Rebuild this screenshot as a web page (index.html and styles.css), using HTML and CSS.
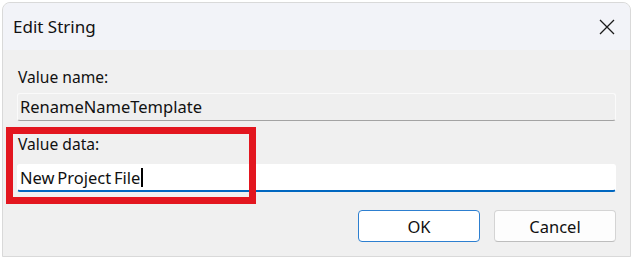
FILE: index.html
```html
<!DOCTYPE html>
<html>
<head>
<meta charset="utf-8">
<link rel="stylesheet" href="styles.css">
</head>
<body>
<div class="window">
  <div class="titlebar">
    <span class="title">Edit String</span>
    <span class="close">
      <svg width="16" height="16" viewBox="0 0 16 16"><path d="M1 1 L15 15 M15 1 L1 15" stroke="#1a1a1a" stroke-width="1.3" fill="none"/></svg>
    </span>
  </div>
  <div class="content">
    <div class="label">Value name:</div>
    <div class="field readonly">RenameNameTemplate</div>
    <div class="label second">Value data:</div>
    <div class="field edit">New Project File<span class="caret"></span></div>
    <div class="buttons">
      <button class="btn default">OK</button>
      <button class="btn">Cancel</button>
    </div>
  </div>
  <div class="highlight"></div>
</div>
</body>
</html>
```
FILE: styles.css
```css
html, body {
  margin: 0;
  padding: 0;
  background: #ffffff;
}
body {
  font-family: "Noto Sans", "Open Sans", sans-serif;
  color: #111111;
}
.window {
  position: relative;
  box-sizing: border-box;
  margin: 2px 0 0 2px;
  width: 629px;
  height: 255px;
  border: 1px solid #d9d9d9;
  border-radius: 8px 8px 0 0;
  background: #f0f0f0;
  overflow: hidden;
}
.titlebar {
  height: 47px;
  background: #f2f3f8;
  display: flex;
  align-items: center;
  justify-content: space-between;
}
.title {
  padding-left: 10px;
  font-size: 17px;
  padding-bottom: 1px;
}
.close {
  width: 46px;
  height: 47px;
  display: flex;
  align-items: center;
  justify-content: center;
}
.content {
  padding: 17px 14px 0 14px;
  display: flex;
  flex-direction: column;
}
.label {
  font-size: 15.6px;
  line-height: 20px;
  height: 20px;
  margin-left: 1px;
}
.label.second {
  margin-top: 13px;
}
.field {
  box-sizing: border-box;
  height: 28px;
  margin-top: 6px;
  padding: 0 2px;
  font-size: 16.5px;
  line-height: 26px;
  border-radius: 3px;
  display: flex;
  align-items: center;
  white-space: pre;
}
.field.readonly {
  background: #efefef;
  border: 1px solid #fafafa;
  border-bottom: 1px solid #a3a3a3;
}
.field.edit {
  background: #ffffff;
  border: 1px solid #ffffff;
  border-bottom: 2px solid #0067c0;
  margin-top: 10px;
  word-spacing: -1.5px;
}
.caret {
  display: inline-block;
  width: 1.5px;
  height: 19px;
  background: #000;
  margin-left: 1px;
}
.buttons {
  margin-top: 18px;
  display: flex;
  justify-content: flex-end;
  gap: 14px;
}
.btn {
  box-sizing: border-box;
  width: 122px;
  height: 32px;
  font-family: "Noto Sans", "Open Sans", sans-serif;
  font-size: 16.5px;
  color: #111111;
  background: #fdfdfd;
  border: 1px solid #d4d4d4;
  border-bottom-color: #bdbdbd;
  border-radius: 4px;
  padding: 0;
}
.btn.default {
  border: 1px solid #2d7fd0;
  background: #ffffff;
}
.highlight {
  position: absolute;
  left: 3px;
  top: 124px;
  width: 250px;
  height: 77px;
  box-sizing: border-box;
  border: 7px solid #e3161f;
}
```
